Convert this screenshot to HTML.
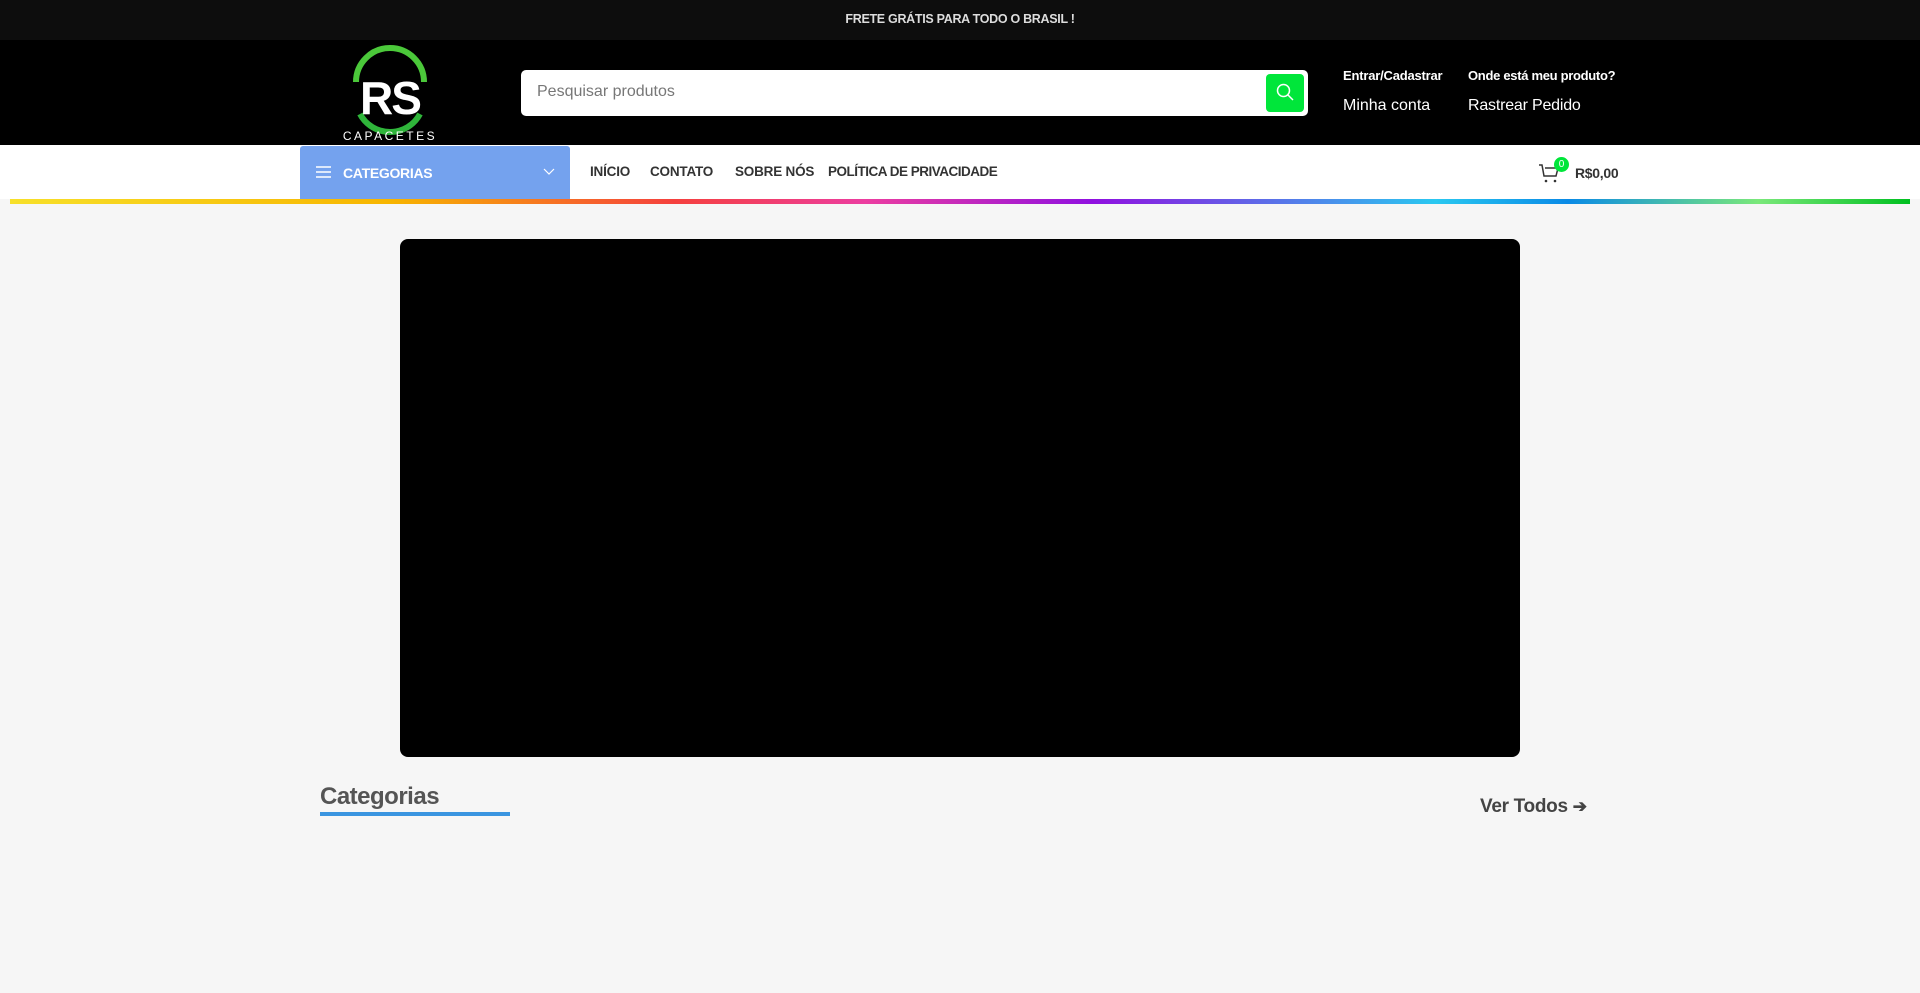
<!DOCTYPE html>
<html><head><meta charset="utf-8"><style>
*{margin:0;padding:0;box-sizing:border-box}
body{width:1920px;height:993px;background:#f6f6f6;font-family:"Liberation Sans",sans-serif;position:relative;overflow:hidden}
.a{position:absolute}
.n{color:#333;font-weight:bold;font-size:13.5px;top:164px;letter-spacing:-0.2px}
</style></head><body>
<div class="a" style="left:0;top:0;width:1920px;height:40px;background:#0d0d0d"></div>
<div class="a" style="left:0;top:12px;width:1920px;text-align:center;color:#ddd;font-weight:bold;font-size:12.5px;letter-spacing:-0.3px">FRETE GRÁTIS PARA TODO O BRASIL !</div>
<div class="a" style="left:0;top:40px;width:1920px;height:105px;background:#000"></div>
<svg class="a" style="left:340px;top:44px" width="100" height="100" viewBox="0 0 100 100">
<path d="M16 38 A34 34 0 0 1 84 38" fill="none" stroke="#4bc83a" stroke-width="6"/>
<path d="M20 70 A34 34 0 0 0 80 70" fill="none" stroke="#2fb53a" stroke-width="6"/>
<text x="50" y="70" text-anchor="middle" fill="#fff" font-family="Liberation Sans" font-weight="bold" font-size="46" letter-spacing="-2">RS</text>
<text x="50" y="96" text-anchor="middle" fill="#fff" font-family="Liberation Sans" font-size="12" letter-spacing="2.5">CAPACETES</text>
</svg>
<div class="a" style="left:521px;top:70px;width:787px;height:46px;background:#fff;border-radius:5px"></div>
<div class="a" style="left:537px;top:83px;color:#777;font-size:16px">Pesquisar produtos</div>
<div class="a" style="left:1266px;top:74px;width:38px;height:38px;background:#00e63a;border-radius:4px"></div>
<svg class="a" style="left:1275px;top:82px" width="20" height="20" viewBox="0 0 20 20"><circle cx="8.5" cy="8.5" r="6" fill="none" stroke="#fff" stroke-width="1.5"/><path d="M13 13l5 5" stroke="#fff" stroke-width="1.5"/></svg>
<div class="a" style="left:1343px;top:68px;color:#fff;font-weight:bold;font-size:13px;letter-spacing:-0.2px">Entrar/Cadastrar</div>
<div class="a" style="left:1343px;top:97px;color:#fff;font-size:16px">Minha conta</div>
<div class="a" style="left:1468px;top:68px;color:#fff;font-weight:bold;font-size:13px;letter-spacing:-0.3px">Onde está meu produto?</div>
<div class="a" style="left:1468px;top:97px;color:#fff;font-size:16px;letter-spacing:-0.2px">Rastrear Pedido</div>
<div class="a" style="left:0;top:145px;width:1920px;height:54px;background:#fff"></div>
<div class="a" style="left:300px;top:146px;width:270px;height:53px;background:#74a2ee;border-radius:3px 3px 0 0"></div>
<svg class="a" style="left:315px;top:165px" width="18" height="14"><path d="M1 2h15M1 7h15M1 12h15" stroke="#fff" stroke-width="1.5"/></svg>
<div class="a" style="left:343px;top:165px;color:#fff;font-weight:bold;font-size:14px;letter-spacing:-0.3px">CATEGORIAS</div>
<svg class="a" style="left:543px;top:168px" width="12" height="8"><path d="M1 1l5 5 5-5" fill="none" stroke="#fff" stroke-width="1.2"/></svg>
<div class="a n" style="left:590px">INÍCIO</div>
<div class="a n" style="left:650px">CONTATO</div>
<div class="a n" style="left:735px">SOBRE NÓS</div>
<div class="a n" style="left:828px;letter-spacing:-0.5px">POLÍTICA DE PRIVACIDADE</div>
<svg class="a" style="left:1538px;top:160px" width="24" height="24" viewBox="0 0 24 24"><path d="M1 5h3l2 11h12l2-8H7" fill="none" stroke="#333" stroke-width="1.5"/><circle cx="8" cy="21" r="1.3" fill="#333"/><circle cx="17" cy="21" r="1.3" fill="#333"/></svg>
<div class="a" style="left:1554px;top:157px;width:15px;height:15px;border-radius:50%;background:#00e63a;color:#fff;font-size:10px;text-align:center;line-height:15px">0</div>
<div class="a" style="left:1575px;top:165px;color:#333;font-weight:bold;font-size:14px;letter-spacing:-0.3px">R$0,00</div>
<div class="a" style="left:10px;top:199px;width:1900px;height:5px;background:linear-gradient(90deg,#f7e02a,#f7b500 20%,#f5403e 35%,#ec3da0 45%,#9010e0 57%,#2ac8f0 75%,#0a8ae6 82%,#7ae87a 92%,#00c020)"></div>
<div class="a" style="left:400px;top:239px;width:1120px;height:518px;background:#000;border-radius:8px"></div>
<div class="a" style="left:320px;top:783px;color:#555;font-size:24px;font-weight:bold;letter-spacing:-0.5px">Categorias</div>
<div class="a" style="left:320px;top:812px;width:190px;height:4px;background:#3a95e0"></div>
<div class="a" style="left:1480px;top:796px;color:#444;font-size:19px;font-weight:bold;letter-spacing:-0.3px">Ver Todos <span style="font-size:17px">➔</span></div>
</body></html>
